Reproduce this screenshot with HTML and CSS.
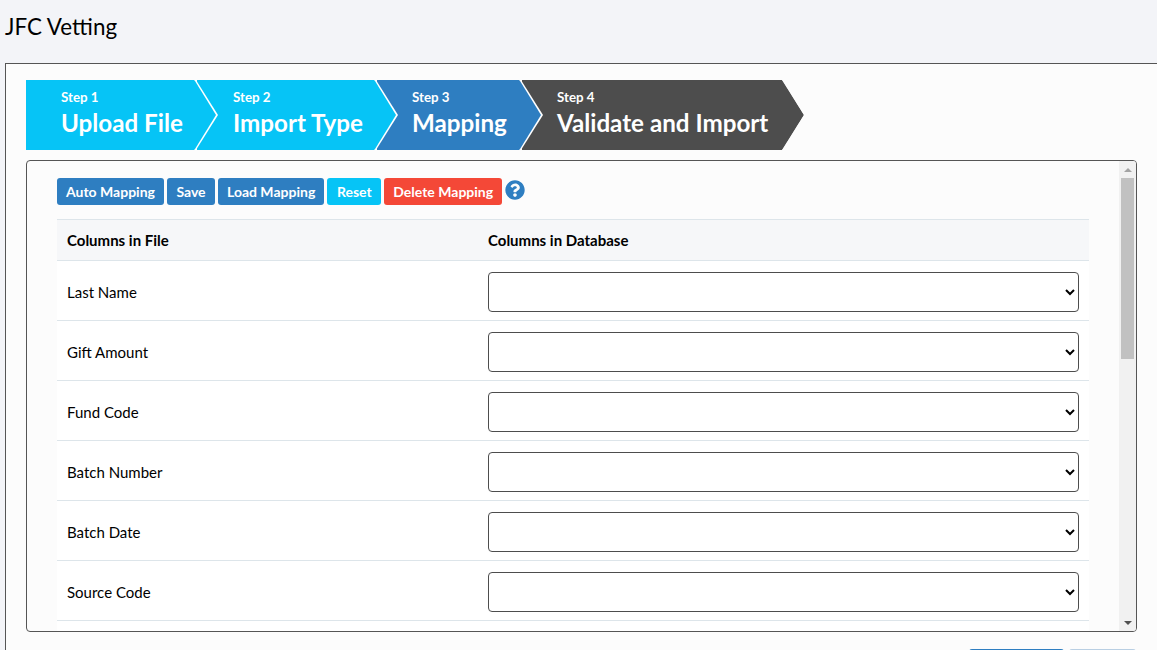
FILE: index.html
```html
<!DOCTYPE html>
<html lang="en">
<head>
<meta charset="utf-8">
<title>JFC Vetting</title>
<link rel="stylesheet" href="styles.css">
</head>
<body>
<header class="page-header"><h1 class="page-title">JFC Vetting</h1></header>
<main class="panel">
  <ol class="steps">
    <li class="step step-a"><div class="step-inner cyan"><span class="step-no">Step 1</span><span class="step-name">Upload File</span></div></li>
    <li class="step step-b"><div class="step-inner cyan"><span class="step-no">Step 2</span><span class="step-name">Import Type</span></div></li>
    <li class="step step-c"><div class="step-inner blue"><span class="step-no">Step 3</span><span class="step-name">Mapping</span></div></li>
    <li class="step step-d"><div class="step-inner dark"><span class="step-no">Step 4</span><span class="step-name">Validate and Import</span></div></li>
  </ol>
  <section class="scrollbox">
    <div class="toolbar">
      <button class="btn btn-blue">Auto Mapping</button>
      <button class="btn btn-blue btn-save">Save</button>
      <button class="btn btn-blue">Load Mapping</button>
      <button class="btn btn-cyan">Reset</button>
      <button class="btn btn-red">Delete Mapping</button>
      <svg class="help" viewBox="0 0 512 512" aria-label="Help"><path d="M504 256c0 136.997-111.043 248-248 248S8 392.997 8 256C8 119.083 119.043 8 256 8s248 111.083 248 248zM262.655 90c-54.497 0-89.255 22.957-116.549 63.758-3.536 5.286-2.353 12.415 2.715 16.258l34.699 26.31c5.205 3.947 12.621 3.008 16.665-2.122 17.864-22.658 30.113-35.797 57.303-35.797 20.429 0 45.698 13.148 45.698 32.958 0 14.976-12.363 22.667-32.534 33.976C247.128 238.528 216 254.941 216 296v4c0 6.627 5.373 12 12 12h56c6.627 0 12-5.373 12-12v-1.333c0-28.462 83.186-29.647 83.186-106.667 0-58.002-60.165-102-116.531-102zM256 338c-25.365 0-46 20.635-46 46 0 25.364 20.635 46 46 46s46-20.636 46-46c0-25.365-20.635-46-46-46z"/></svg>
    </div>
    <table class="map-table">
      <thead><tr><th class="col-file">Columns in File</th><th>Columns in Database</th></tr></thead>
      <tbody>
        <tr><td class="name-cell">Last Name</td><td class="select-cell"><select class="map-select"><option></option></select></td></tr>
        <tr><td class="name-cell">Gift Amount</td><td class="select-cell"><select class="map-select"><option></option></select></td></tr>
        <tr><td class="name-cell">Fund Code</td><td class="select-cell"><select class="map-select"><option></option></select></td></tr>
        <tr><td class="name-cell">Batch Number</td><td class="select-cell"><select class="map-select"><option></option></select></td></tr>
        <tr><td class="name-cell">Batch Date</td><td class="select-cell"><select class="map-select"><option></option></select></td></tr>
        <tr><td class="name-cell">Source Code</td><td class="select-cell"><select class="map-select"><option></option></select></td></tr>
        <tr><td class="name-cell"></td><td class="select-cell"></td></tr>
      </tbody>
    </table>
    <div class="scrollbar" aria-hidden="true">
      <div class="sb-btn"><span class="sb-up"></span></div>
      <div class="sb-track"><div class="sb-thumb"></div></div>
      <div class="sb-btn"><span class="sb-down"></span></div>
    </div>
  </section>
  <div class="footer-actions">
    <button class="foot-btn foot-primary" aria-label="Next"></button>
    <button class="foot-btn foot-muted" aria-label="Back"></button>
  </div>
</main>
</body>
</html>
```
FILE: styles.css
```css
* { box-sizing: border-box; }
html, body { height: 650px; overflow: hidden; }
body {
  margin: 0;
  background: #f3f4f8;
  color: #000;
  font-family: Lato, "Liberation Sans", sans-serif;
  font-size: 15px;
}
.page-header { height: 63px; padding: 12px 0 0 5px; }
.page-title { margin: 0; font-size: 22.4px; font-weight: 400; line-height: 30px; color: #000; }

.panel {
  margin-left: 5px;
  border-top: 1px solid #555;
  border-left: 1px solid #555;
  background: #fcfcfc;
  padding: 16px 20px 0 20px;
  height: 587px;
  overflow: hidden;
}

.steps { display: flex; list-style: none; margin: 0; padding: 0; height: 70px; }
.step {
  position: relative;
  background: #fff;
  clip-path: polygon(0 0, calc(100% - 22px) 0, 100% 50%, calc(100% - 22px) 100%, 0 100%);
  margin-right: -21px;
}
.step-a { width: 192px; z-index: 4; }
.step-b { width: 201px; z-index: 3; }
.step-c { width: 166px; z-index: 2; }
.step-d { width: 282px; z-index: 1; }
.step-inner {
  height: 70px;
  margin-right: 2px;
  display: flex;
  flex-direction: column;
  clip-path: polygon(0 0, calc(100% - 22px) 0, calc(100% - 21px) 1px, 100% 50%, calc(100% - 21px) calc(100% - 1px), calc(100% - 22px) 100%, 0 100%);
  color: #fff;
  padding: 8px 0 0 35px;
}
.step-b .step-inner { padding-left: 36px; }
.step-d .step-inner { margin-right: 0; }
.cyan { background: #06c4f6; }
.blue { background: #2e7ec1; }
.dark { background: #4d4d4d; }
.step-no { font-size: 13.3px; font-weight: 700; line-height: 18px; }
.step-name { font-size: 24.2px; font-weight: 700; line-height: 33px; white-space: nowrap; }

.scrollbox {
  position: relative;
  margin-top: 10px;
  height: 472px;
  width: 1111px;
  border: 1px solid #555;
  border-radius: 4px;
  overflow: hidden;
  padding: 17px 48px 0 30px;
  background: #fcfcfc;
}
.scrollbar {
  position: absolute;
  top: 0;
  right: 0;
  bottom: 0;
  width: 17px;
  display: flex;
  flex-direction: column;
  background: #f1f1f1;
}
.sb-btn { height: 17px; display: flex; align-items: center; justify-content: center; }
.sb-up { border: 4px solid transparent; border-top: 0; border-bottom: 4px solid #a3a3a3; }
.sb-down { border: 4px solid transparent; border-bottom: 0; border-top: 4px solid #505050; }
.sb-track { flex: 1; padding: 0 2px; }
.sb-thumb { height: 181px; background: #c1c1c1; }

.toolbar { display: flex; align-items: flex-start; gap: 3px; height: 41px; }
.btn {
  height: 27px;
  padding: 0 9px;
  border: 0;
  border-radius: 3px;
  color: #fff;
  font-family: Lato, "Liberation Sans", sans-serif;
  font-size: 14px;
  font-weight: 700;
  white-space: nowrap;
}
.btn-blue { background: #2e7ec1; }
.btn-save { width: 48px; }
.btn-cyan { background: #06c4f6; width: 54px; }
.btn-red { background: #f44837; }
.help { width: 20px; height: 20px; fill: #2e7ec1; margin-top: 2px; }

.map-table { width: 1032px; border-collapse: collapse; background: #fff; table-layout: fixed; }
.map-table th {
  background: #f6f7f9;
  border-top: 1px solid #dde5ea;
  border-bottom: 1px solid #dde5ea;
  height: 41px;
  padding: 0 10px;
  text-align: left;
  font-size: 15px;
  font-weight: 700;
  color: #000;
}
.col-file { width: 421px; }
.map-table td {
  height: 60px;
  border-bottom: 1px solid #dde5ea;
  font-size: 15px;
  color: #000;
}
.name-cell { padding: 2px 10px 0; vertical-align: middle; }
.select-cell { padding: 11px 10px 0; vertical-align: top; }
.map-select {
  display: block;
  width: 100%;
  height: 40px;
  border: 1px solid #4d4d4d;
  border-radius: 4px;
  background-color: #fff;
  color: #000;
  font-family: Lato, "Liberation Sans", sans-serif;
  font-size: 15px;
}

.footer-actions { display: flex; justify-content: flex-end; gap: 5px; width: 1110px; margin-top: 17px; }
.foot-btn { height: 32px; border: 0; border-radius: 3px 3px 0 0; }
.foot-primary { width: 95px; background: #2e7ec1; }
.foot-muted { width: 67px; background: #b9cfe3; }
```
